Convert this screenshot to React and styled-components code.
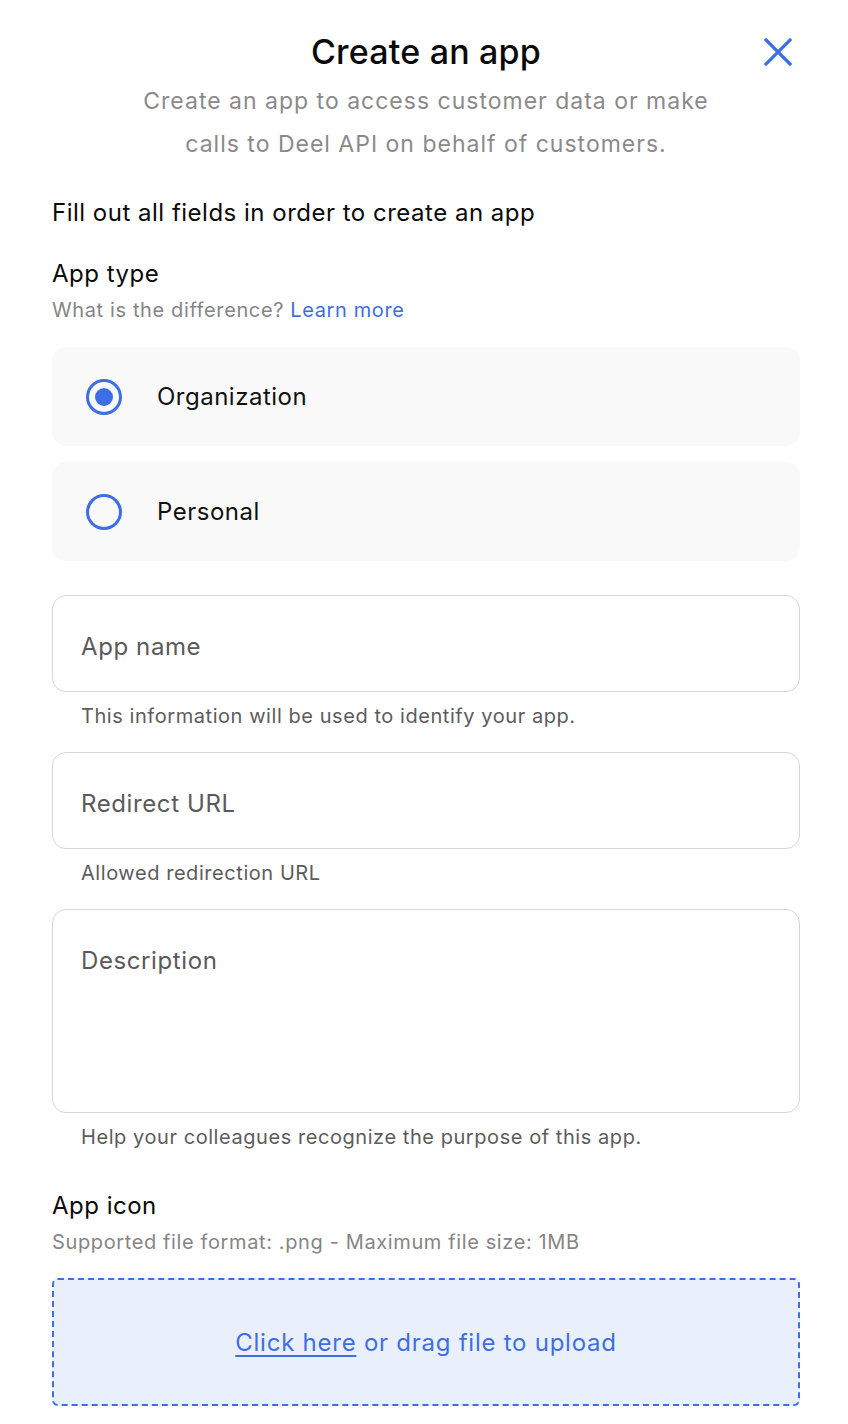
import React from "react";
import styled, { createGlobalStyle } from "styled-components";

const Global = createGlobalStyle`
  * { box-sizing: border-box; }
  body {
    margin: 0;
    background: #ffffff;
    font-family: Inter, "Noto Sans", "Liberation Sans", sans-serif;
    color: #111;
  }
`;

const BLUE = "#3e6fe2";

const Page = styled.div`
  width: 848px;
  padding: 32px 48px 0 52px;
  display: flex;
  flex-direction: column;
`;

const Header = styled.header`
  position: relative;
  display: flex;
  flex-direction: column;
  align-items: center;
  gap: 8px;
`;

const Title = styled.h1`
  margin: 0;
  font-size: 34px;
  line-height: 40px;
  font-weight: 500;
  color: #0a0a0a;
  letter-spacing: 0.2px;
`;

const Subtitle = styled.p`
  margin: 0;
  width: 620px;
  text-align: center;
  font-size: 23px;
  line-height: 43px;
  color: #8a8a8a;
  letter-spacing: 1px;
`;

const CloseButton = styled.button`
  position: absolute;
  right: 6px;
  top: 4px;
  width: 32px;
  height: 32px;
  padding: 0;
  border: none;
  background: transparent;
  display: flex;
  align-items: center;
  justify-content: center;
  cursor: pointer;
`;

const Intro = styled.p`
  margin: 31px 0 0;
  font-size: 24px;
  line-height: 32px;
  color: #0a0a0a;
  letter-spacing: 0.5px;
`;

const SectionTitle = styled.h2`
  margin: ${(p) => p.$top}px 0 0;
  font-size: 24px;
  line-height: 32px;
  font-weight: 400;
  color: #0a0a0a;
  letter-spacing: 0.5px;
`;

const SectionHint = styled.p`
  margin: 6px 0 0;
  font-size: 20px;
  line-height: 28px;
  color: #858585;
  letter-spacing: 0.62px;
`;

const LinkText = styled.a`
  color: ${BLUE};
  text-decoration: none;
`;

const RadioGroup = styled.div`
  margin-top: 23px;
  display: flex;
  flex-direction: column;
  gap: 16px;
`;

const RadioCard = styled.label`
  height: 99px;
  border-radius: 14px;
  background: #f9f9f9;
  display: flex;
  align-items: center;
  padding-left: 34px;
  gap: 35px;
  cursor: pointer;
`;

const RadioCircle = styled.span`
  width: 36px;
  height: 36px;
  border-radius: 50%;
  border: 3px solid ${BLUE};
  display: flex;
  align-items: center;
  justify-content: center;
  flex-shrink: 0;
  &::after {
    content: "";
    width: 18px;
    height: 18px;
    border-radius: 50%;
    background: ${BLUE};
    display: ${(p) => (p.$checked ? "block" : "none")};
  }
`;

const RadioLabel = styled.span`
  font-size: 24px;
  line-height: 32px;
  color: #111;
  letter-spacing: 0.5px;
`;

const Field = styled.div`
  margin-top: ${(p) => p.$top}px;
  display: flex;
  flex-direction: column;
  gap: 10px;
`;

const TextInput = styled.input`
  width: 100%;
  height: 97px;
  border: 1px solid #d6d6d6;
  border-radius: 14px;
  padding: 6px 28px 0;
  font-family: inherit;
  font-size: 24px;
  letter-spacing: 0.6px;
  color: #222;
  background: #fff;
  outline: none;
  &::placeholder {
    color: #5a5a5a;
  }
`;

const TextArea = styled.textarea`
  width: 100%;
  height: 204px;
  border: 1px solid #d6d6d6;
  border-radius: 14px;
  padding: 35px 28px 0;
  font-family: inherit;
  font-size: 24px;
  letter-spacing: 0.6px;
  line-height: 32px;
  color: #222;
  background: #fff;
  outline: none;
  resize: none;
  display: block;
  &::placeholder {
    color: #5a5a5a;
  }
`;

const Helper = styled.span`
  padding-left: 29px;
  font-size: 20px;
  line-height: 28px;
  color: #5c5c5c;
  letter-spacing: 0.56px;
`;

const DropZone = styled.div`
  margin-top: 22px;
  height: 128px;
  border: 2px dashed ${BLUE};
  border-radius: 6px;
  background: #eaf0fb;
  display: flex;
  align-items: center;
  justify-content: center;
  font-size: 24px;
  letter-spacing: 0.75px;
  color: ${BLUE};
  white-space: pre;
`;

const UploadLink = styled.span`
  text-decoration: underline;
  text-underline-offset: 4px;
  cursor: pointer;
`;

const CloseIcon = () => (
  <svg width="30" height="30" viewBox="0 0 30 30" fill="none">
    <path d="M3 3 L27 27 M27 3 L3 27" stroke={BLUE} strokeWidth="3.2" strokeLinecap="square" />
  </svg>
);

export default function App() {
  const [type, setType] = React.useState("organization");
  return (
    <>
      <Global />
      <Page>
        <Header>
          <Title>Create an app</Title>
          <Subtitle>
            Create an app to access customer data or make calls to Deel API on behalf of customers.
          </Subtitle>
          <CloseButton aria-label="Close">
            <CloseIcon />
          </CloseButton>
        </Header>

        <Intro>Fill out all fields in order to create an app</Intro>

        <SectionTitle $top={29}>App type</SectionTitle>
        <SectionHint>
          What is the difference? <LinkText href="#">Learn more</LinkText>
        </SectionHint>

        <RadioGroup>
          <RadioCard onClick={() => setType("organization")}>
            <RadioCircle $checked={type === "organization"} />
            <RadioLabel>Organization</RadioLabel>
          </RadioCard>
          <RadioCard onClick={() => setType("personal")}>
            <RadioCircle $checked={type === "personal"} />
            <RadioLabel>Personal</RadioLabel>
          </RadioCard>
        </RadioGroup>

        <Field $top={34}>
          <TextInput placeholder="App name" />
          <Helper>This information will be used to identify your app.</Helper>
        </Field>

        <Field $top={22}>
          <TextInput placeholder="Redirect URL" />
          <Helper>Allowed redirection URL</Helper>
        </Field>

        <Field $top={22}>
          <TextArea placeholder="Description" />
          <Helper>Help your colleagues recognize the purpose of this app.</Helper>
        </Field>

        <SectionTitle $top={39}>App icon</SectionTitle>
        <SectionHint>Supported file format: .png - Maximum file size: 1MB</SectionHint>

        <DropZone>
          <UploadLink>Click here</UploadLink> or drag file to upload
        </DropZone>
      </Page>
    </>
  );
}
